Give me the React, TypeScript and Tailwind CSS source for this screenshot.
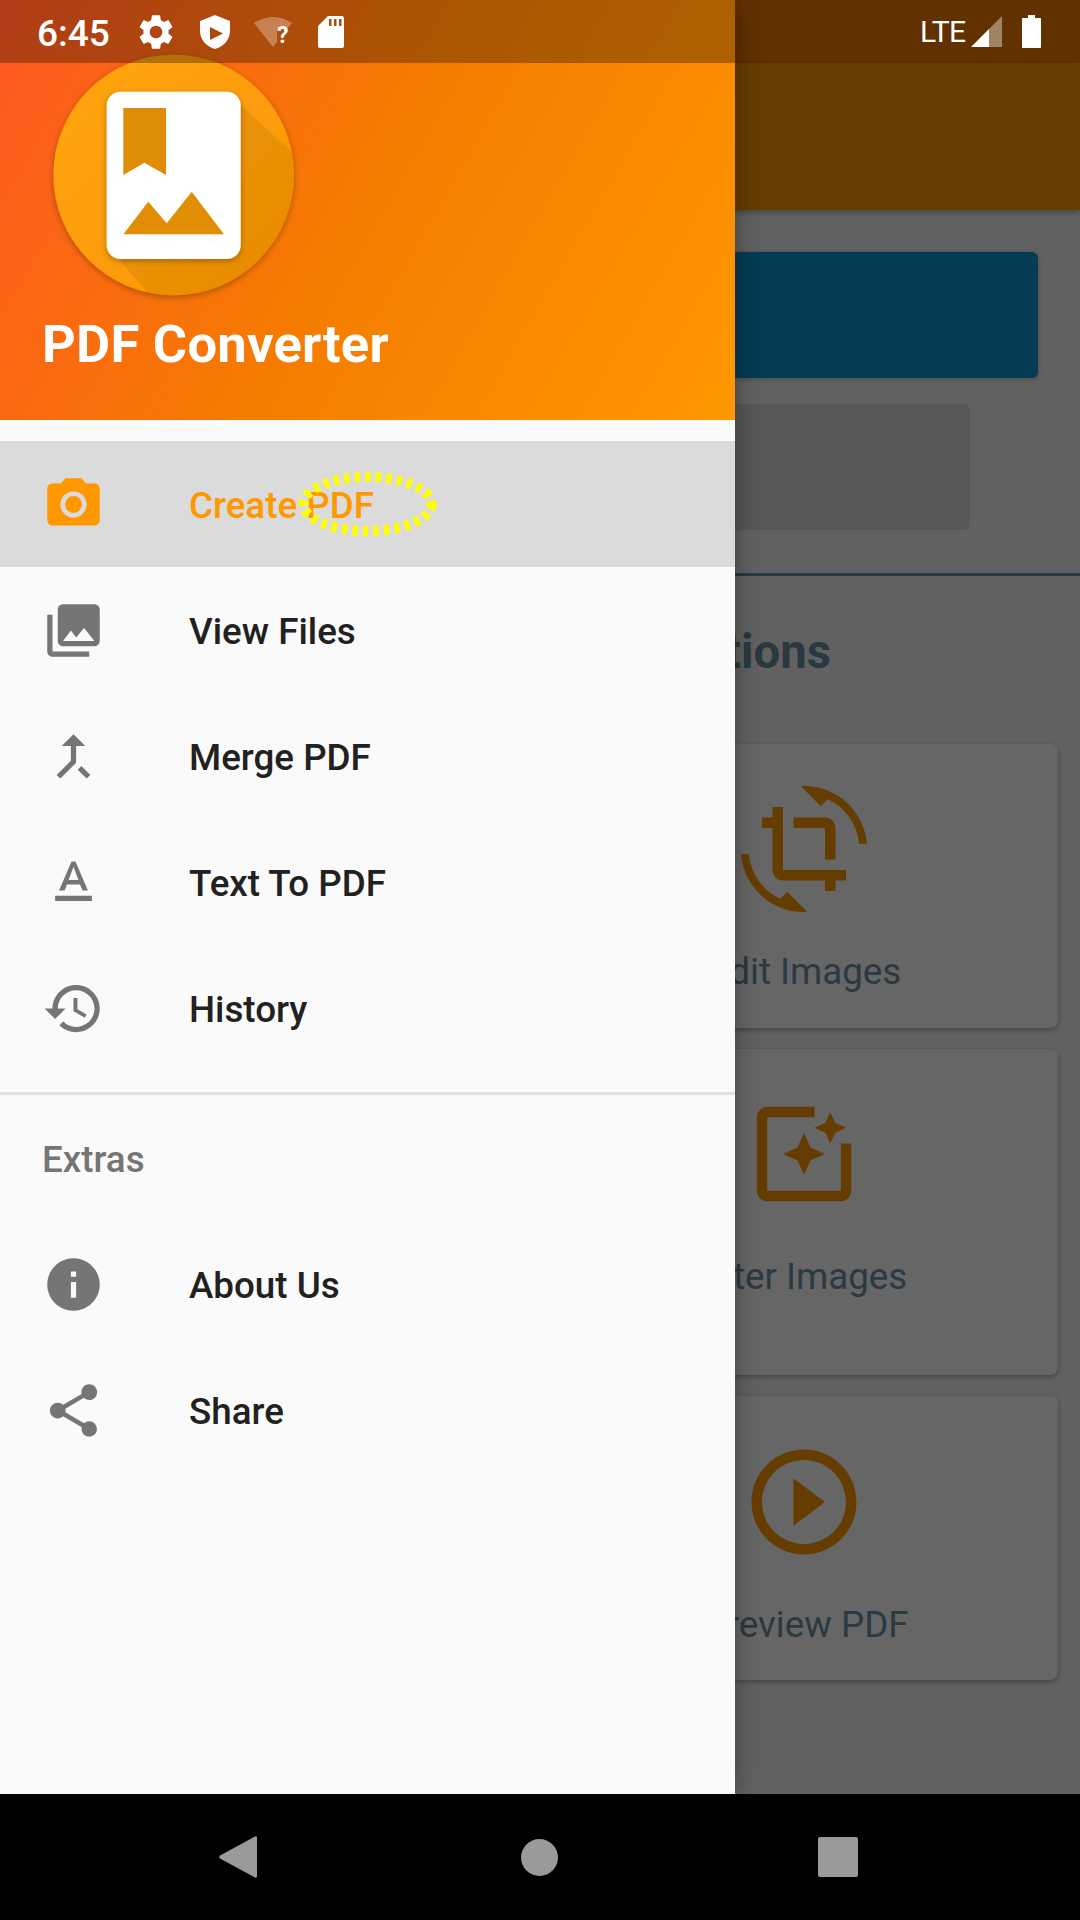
import type { ReactNode } from 'react';

// material icon paths, 24 unit box
const ICONS = {
  camera:
    'M9 2L7.17 4H4c-1.1 0-2 .9-2 2v12c0 1.1.9 2 2 2h16c1.1 0 2-.9 2-2V6c0-1.1-.9-2-2-2h-3.17L15 2H9zm3 15c-2.76 0-5-2.24-5-5s2.24-5 5-5 5 2.24 5 5-2.24 5-5 5zM12 8.8a3.2 3.2 0 1 1 0 6.4 3.2 3.2 0 0 1 0-6.4z',
  library:
    'M22 16V4c0-1.1-.9-2-2-2H8c-1.1 0-2 .9-2 2v12c0 1.1.9 2 2 2h12c1.1 0 2-.9 2-2zm-11-4l2.03 2.71L16 11l4 5H8l3-4zM2 6v14c0 1.1.9 2 2 2h14v-2H4V6H2z',
  merge:
    'M17 20.41L18.41 19 15 15.59 13.59 17 17 20.41zM7.5 8H11v5.59L5.59 19 7 20.41l6-6V8h3.5L12 3.5 7.5 8z',
  text: 'M5 17v2h14v-2H5zm4.5-4.2h5l.9 2.2h2.1L12.75 4h-1.5L6.5 15h2.1l.9-2.2zM12 5.98L13.87 11h-3.74L12 5.98z',
  history:
    'M13 3c-4.97 0-9 4.03-9 9H1l3.89 3.89.07.14L9 12H6c0-3.87 3.13-7 7-7s7 3.13 7 7-3.13 7-7 7c-1.93 0-3.68-.79-4.94-2.06l-1.42 1.42C8.27 19.99 10.51 21 13 21c4.97 0 9-4.03 9-9s-4.03-9-9-9zm-1 5v5l4.28 2.54.72-1.21-3.5-2.08V8H12z',
  info: 'M12 2C6.48 2 2 6.48 2 12s4.48 10 10 10 10-4.48 10-10S17.52 2 12 2zm1 15h-2v-6h2v6zm0-8h-2V7h2v2z',
  share:
    'M18 16.08c-.76 0-1.44.3-1.96.77L8.91 12.7c.05-.23.09-.46.09-.7s-.04-.47-.09-.7l7.05-4.11c.54.5 1.25.81 2.04.81 1.66 0 3-1.34 3-3s-1.34-3-3-3-3 1.34-3 3c0 .24.04.47.09.7L8.04 9.81C7.5 9.31 6.79 9 6 9c-1.66 0-3 1.34-3 3s1.34 3 3 3c.79 0 1.5-.31 2.04-.81l7.12 4.16c-.05.21-.08.43-.08.65 0 1.61 1.31 2.92 2.92 2.92 1.61 0 2.92-1.31 2.92-2.92s-1.31-2.92-2.92-2.92z',
  crop: 'M7.47 21.49C4.2 19.93 1.86 16.76 1.5 13H0c.51 6.16 5.66 11 11.95 11 .23 0 .44-.02.66-.03L8.8 20.15l-1.33 1.34zM12.05 0c-.23 0-.44.02-.66.04l3.81 3.81 1.33-1.33C19.8 4.07 22.14 7.24 22.5 11H24c-.51-6.16-5.66-11-11.95-11zM16 14h2V8c0-1.11-.9-2-2-2h-6v2h6v6zm-8 2V4H6v2H4v2h2v8c0 1.1.89 2 2 2h8v2h2v-2h2v-2H8z',
  filter:
    'M19.02 10v9H5V5h9V3H5.02c-1.1 0-2 .9-2 2v14c0 1.1.9 2 2 2H19c1.1 0 2-.9 2-2v-9h-1.98zM17 10l.94-2.06L20 7l-2.06-.94L17 4l-.94 2.06L14 7l2.06.94L17 10zm-3.75.75L12 8l-1.25 2.75L8 12l2.75 1.25L12 16l1.25-2.75L16 12l-2.75-1.25z',
  play: 'M10 16.5l6-4.5-6-4.5v9zM12 2C6.48 2 2 6.48 2 12s4.48 10 10 10 10-4.48 10-10S17.52 2 12 2zm0 18c-4.41 0-8-3.59-8-8s3.59-8 8-8 8 3.59 8 8-3.59 8-8 8z',
  gear: 'M19.14 12.94c.04-.3.06-.61.06-.94 0-.32-.02-.64-.07-.94l2.03-1.58c.18-.14.23-.41.12-.61l-1.92-3.32c-.12-.22-.37-.29-.59-.22l-2.39.96c-.5-.38-1.03-.7-1.62-.94l-.36-2.54c-.04-.24-.24-.41-.48-.41h-3.84c-.24 0-.43.17-.47.41l-.36 2.54c-.59.24-1.13.57-1.62.94l-2.39-.96c-.22-.08-.47 0-.59.22L2.74 8.87c-.12.21-.08.47.12.61l2.03 1.58c-.05.3-.09.63-.09.94s.02.64.07.94l-2.03 1.58c-.18.14-.23.41-.12.61l1.92 3.32c.12.22.37.29.59.22l2.39-.96c.5.38 1.03.7 1.62.94l.36 2.54c.05.24.24.41.48.41h3.84c.24 0 .44-.17.47-.41l.36-2.54c.59-.24 1.13-.56 1.62-.94l2.39.96c.22.08.47 0 .59-.22l1.92-3.32c.12-.22.07-.47-.12-.61l-2.01-1.58zM12 15.6c-1.98 0-3.6-1.62-3.6-3.6s1.62-3.6 3.6-3.6 3.6 1.62 3.6 3.6-1.62 3.6-3.6 3.6z',
};

function Icon({ d, className }: { d: string; className: string }) {
  return (
    <svg viewBox="0 0 24 24" className={className} fill="currentColor" fillRule="evenodd" aria-hidden="true">
      <path d={d} />
    </svg>
  );
}

function Logo() {
  return (
    <svg viewBox="40 45 255 255" className="h-[255px] w-[255px] overflow-visible" aria-hidden="true">
      <defs>
        <linearGradient id="disc" x1="0" y1="0" x2="1" y2="1">
          <stop offset="0" stopColor="#ffa512" />
          <stop offset="1" stopColor="#fb9600" />
        </linearGradient>
        <clipPath id="discClip">
          <circle cx="173.7" cy="175" r="120.3" />
        </clipPath>
        <filter id="lift" x="-20%" y="-20%" width="140%" height="140%">
          <feDropShadow dx="0" dy="2" stdDeviation="3" floodColor="#000" floodOpacity="0.3" />
        </filter>
      </defs>
      <circle cx="173.7" cy="175" r="120.3" fill="url(#disc)" filter="url(#lift)" />
      <polygon
        points="241,105 292,152 320,320 148,293 115,255"
        fill="#000"
        fillOpacity="0.07"
        clipPath="url(#discClip)"
      />
      <rect x="106.7" y="91.7" width="134" height="167.3" rx="14" fill="#fff" filter="url(#lift)" />
      <polygon points="123.3,108 166,108 166,175 144.3,162.7 123.3,175" fill="#df8d08" />
      <polygon
        points="123.3,234.3 148.3,201.7 166.7,223.3 191.7,191.7 224,234.3"
        fill="#e18e06"
      />
    </svg>
  );
}

function NavRow({
  icon,
  label,
  active = false,
}: {
  icon: string;
  label: string;
  active?: boolean;
}) {
  return (
    <div
      className={`flex h-[126px] items-center pl-[42px] ${active ? 'bg-[#dbdbdb] text-[#ff9800]' : 'text-[#212121]'}`}
    >
      <Icon d={icon} className={`h-[63px] w-[63px] shrink-0 ${active ? 'text-[#ff9800]' : 'text-[#757575]'}`} />
      <span className="mt-[3px] ml-[84px] text-[36.75px] leading-[44px] font-medium">{label}</span>
    </div>
  );
}

function Drawer() {
  return (
    <aside className="absolute top-0 left-0 z-10 flex h-[1794px] w-[735px] flex-col bg-[#fafafa] shadow-[0_0_24px_rgba(0,0,0,0.35)]">
      <header className="h-[420px] bg-linear-[120deg] from-[#ff5722] via-[#f57c00] to-[#ff9800] pt-[45px] pl-[40px]">
        <Logo />
        <h1 className="mt-[13px] -ml-[40px] pl-[42px] text-[52.5px] leading-[62px] font-bold tracking-[0.25px] text-white">
          PDF Converter
        </h1>
      </header>

      <nav className="relative pt-[21px]">
        <NavRow icon={ICONS.camera} label="Create PDF" active />
        <NavRow icon={ICONS.library} label="View Files" />
        <NavRow icon={ICONS.merge} label="Merge PDF" />
        <NavRow icon={ICONS.text} label="Text To PDF" />
        <NavRow icon={ICONS.history} label="History" />

        {/* hand drawn marker round the word PDF */}
        <svg className="absolute top-[52px] left-[298px] h-[64px] w-[139px]" viewBox="298 472 139 64" aria-hidden="true">
          <ellipse cx="367.5" cy="504" rx="64" ry="27" fill="none" stroke="#ffff00" strokeWidth="10" strokeDasharray="5.5 5" />
        </svg>

        <div className="mt-[21px] h-[3px] bg-[#e0e0e0]" />
        <div className="flex h-[126px] items-center pl-[42px] text-[36.75px] font-medium text-[#757575]">
          <span className="mt-[3px]">Extras</span>
        </div>
        <NavRow icon={ICONS.info} label="About Us" />
        <NavRow icon={ICONS.share} label="Share" />
      </nav>
    </aside>
  );
}

function ToolCard({
  icon,
  label,
  className,
  labelClassName = '',
}: {
  icon: string;
  label: string;
  className: string;
  labelClassName?: string;
}) {
  return (
    <div className={`flex w-[508px] flex-col items-center rounded-[8px] bg-white shadow-[0_2px_5px_rgba(0,0,0,0.3)] ${className}`}>
      <Icon d={icon} className="h-[126px] w-[126px] text-[#ff9800]" />
      <span className={`mt-[38px] text-[36.75px] leading-[44px] text-[#6d8fa6] ${labelClassName}`}>{label}</span>
    </div>
  );
}

function HomeScreen() {
  return (
    <main className="relative flex h-[1794px] flex-col bg-[#eff2f0]">
      <div className="h-[63px] bg-[#f57c00]" />
      <div className="h-[147px] bg-[#ff9800] shadow-[0_2px_6px_rgba(0,0,0,0.3)]" />
      <div className="mx-[42px] mt-[42px] h-[126px] rounded-[6px] bg-[#0896d2] shadow-[0_1px_4px_rgba(0,0,0,0.25)]" />
      <div className="mx-[110px] mt-[26px] h-[126px] rounded-[6px] bg-[#dddddd]" />
      <div className="mt-[43px] h-[3px] bg-[#6d8fa6]" />
      <div className="mt-[48px] pr-[249px] text-right text-[47.25px] leading-[56px] font-bold text-[#6a8ca3]">Options</div>
      <div className="mt-[64px] flex flex-col items-end gap-[21px] pr-[22px]">
        <ToolCard icon={ICONS.crop} label="Edit Images" className="h-[284px] pt-[42px]" labelClassName="translate-x-[1px]" />
        <ToolCard icon={ICONS.filter} label="Filter Images" className="h-[326px] pt-[42px]" labelClassName="-translate-x-[3px]" />
        <ToolCard icon={ICONS.play} label="Preview PDF" className="h-[284px] pt-[43px]" labelClassName="translate-x-[2px]" />
      </div>
      {/* drawer scrim */}
      <div className="absolute inset-0 bg-black/60" />
    </main>
  );
}

function StatusIcons({ children }: { children: ReactNode }) {
  return <div className="flex items-center">{children}</div>;
}

function StatusBar() {
  return (
    <div className="absolute top-0 right-0 left-0 z-20 flex h-[63px] text-white">
      <div className="flex w-[735px] items-center bg-black/30 pl-[37px]">
        <span className="mt-[4px] w-[74px] text-[37px] leading-[59px] font-medium">6:45</span>
        <StatusIcons>
          <Icon d={ICONS.gear} className="ml-[24px] h-[42px] w-[42px]" />
          <svg viewBox="0 0 30 34" className="ml-[23px] h-[34px] w-[30px]" fill="#fff" fillRule="evenodd" aria-hidden="true">
            <path d="M15 0L30 6v10c0 9-7 16-15 18C7 32 0 25 0 16V6zM10 12v13l13-6.5z" />
          </svg>
          <div className="relative ml-[24px] h-[34px] w-[38px]">
            <svg viewBox="0 0 38 34" className="h-[34px] w-[38px]" aria-hidden="true">
              <path d="M0 8Q19 -4 38 8L33 14H23V27L19 32Z" fill="#fff" fillOpacity="0.3" />
            </svg>
            <span className="absolute top-[9px] left-[23px] text-[23px] leading-[24px] font-bold">?</span>
          </div>
          <svg viewBox="0 0 26 32" className="ml-[26px] h-[32px] w-[26px]" fill="#fff" fillRule="evenodd" aria-hidden="true">
            <path d="M10 0H24C25 0 26 1 26 2V30C26 31 25 32 24 32H2C1 32 0 31 0 30V10zM11 3V10H13.500V3zM16 3V10H18.500V3zM21 3V10H23.500V3z" />
          </svg>
        </StatusIcons>
      </div>
      <div className="flex flex-1 items-center pl-[185px]">
        <span className="w-[43px] text-[30px] leading-[63px] tracking-[-0.5px]">LTE</span>
        <svg viewBox="0 0 31 31" className="ml-[8px] h-[31px] w-[31px]" aria-hidden="true">
          <path d="M0 31L18 13V31Z" fill="#fff" />
          <path d="M18 13L31 0V31H18Z" fill="#fff" fillOpacity="0.4" />
        </svg>
        <svg viewBox="0 0 19 33" className="ml-[20px] h-[33px] w-[19px]" fill="#fff" aria-hidden="true">
          <path d="M6 0H13V3H18C18.600 3 19 3.400 19 4V32C19 32.600 18.600 33 18 33H1C.4 33 0 32.600 0 32V4C0 3.400 .4 3 1 3H6Z" />
        </svg>
      </div>
    </div>
  );
}

function NavBar() {
  return (
    <div className="flex h-[126px] items-center bg-black pl-[219px]">
      <svg viewBox="0 0 38 42" className="h-[42px] w-[38px]" aria-hidden="true">
        <path d="M36 0.500C37 0 38 .5 38 2V40C38 41.500 37 42 36 41.500L1 22.500C0 21.500 0 20.500 1 19.500Z" fill="#9a9a9a" />
      </svg>
      <div className="ml-[264px] h-[37px] w-[37px] rounded-full bg-[#9a9a9a]" />
      <div className="ml-[260px] h-[40px] w-[40px] rounded-[2px] bg-[#9a9a9a]" />
    </div>
  );
}

export default function App() {
  return (
    <div className="relative h-[1920px] w-[1080px] overflow-hidden bg-black font-['Roboto',sans-serif]">
      <HomeScreen />
      <Drawer />
      <StatusBar />
      <NavBar />
    </div>
  );
}
